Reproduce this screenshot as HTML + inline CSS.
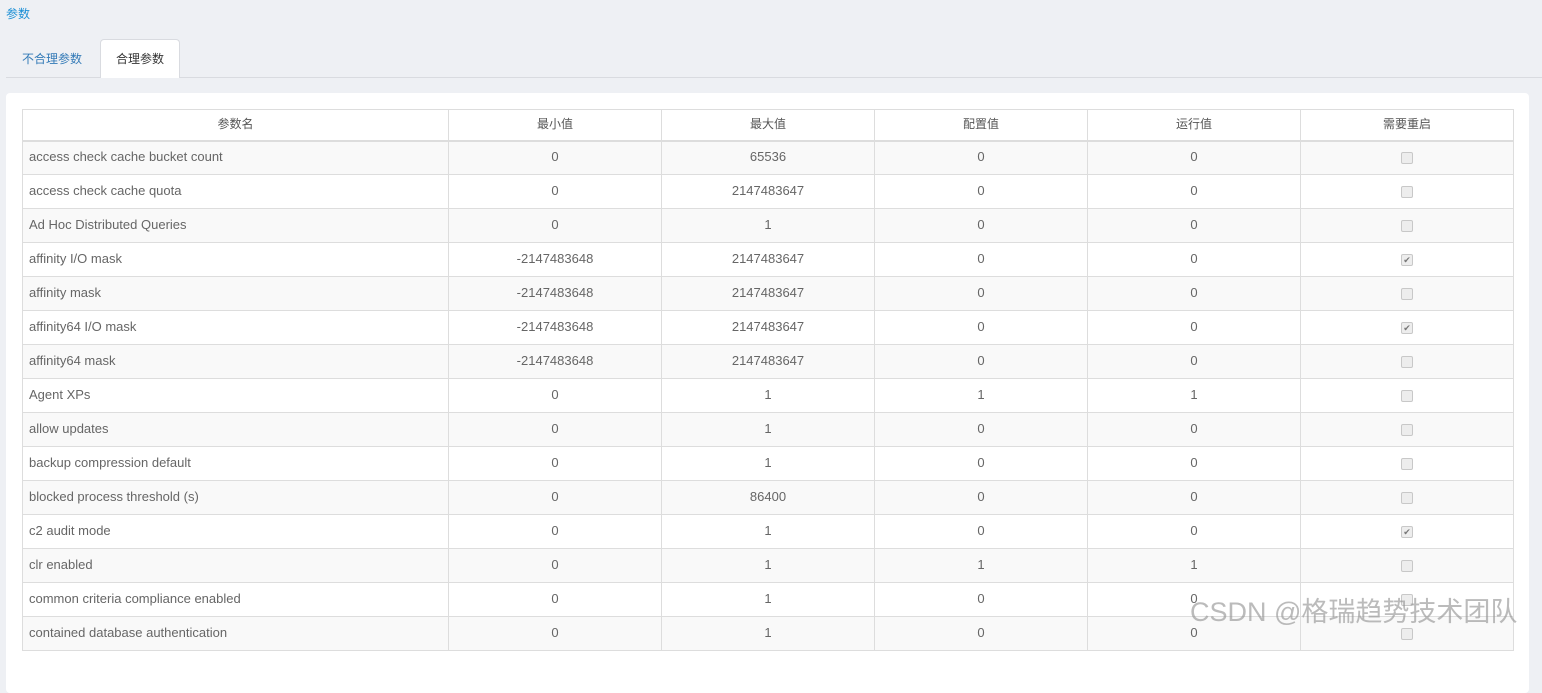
<!DOCTYPE html>
<html><head><meta charset="utf-8"><style>
*{box-sizing:border-box;margin:0;padding:0}
body{width:1542px;height:635px;overflow:hidden;background:#eef0f4;font-family:"Liberation Sans","Noto Sans CJK SC",sans-serif;font-size:13px;color:#666;position:relative}
.title{position:absolute;left:6px;top:5px;font-size:12px;color:#1a8fd6}
.tabline{position:absolute;left:6px;right:0;top:77px;border-top:1px solid #d9dbe0}
.tab1{position:absolute;left:22px;top:50px;font-size:12px;color:#337ab7}
.tab2{position:absolute;left:100px;top:39px;width:80px;height:39px;background:#fff;border:1px solid #d9dbe0;border-bottom:none;border-radius:4px 4px 0 0;font-size:12px;color:#333;text-align:center;line-height:38px}
.panel{position:absolute;left:6px;top:93px;width:1523px;height:600px;background:#fff;border-radius:4px}
table{position:absolute;left:22px;top:109px;border-collapse:collapse;table-layout:fixed;width:1491px}
td,th{border:1px solid #ddd;height:34px;text-align:center;font-weight:normal;padding:0 0 3px 0}
th{height:31px;border-bottom:2px solid #ddd;color:#555;font-size:12px;padding:0 0 2px 0}
td:first-child{text-align:left;padding-left:6px}
tr:nth-child(odd) td{background:#f9f9f9}
.cb{display:inline-block;width:12px;height:12px;border:1px solid #c8c8c8;border-radius:2px;background:#ededed;vertical-align:middle;position:relative;font-size:9px;line-height:10px;color:#777;text-align:center;margin-top:2px}
.wm{position:absolute;left:1190px;top:590px;font-size:27px;color:rgba(150,150,150,.65);font-family:"Liberation Sans","Noto Sans CJK SC",sans-serif}
</style></head><body>
<div class="title">参数</div>
<div class="tabline"></div>
<div class="tab1">不合理参数</div>
<div class="tab2">合理参数</div>
<div class="panel"></div>
<table>
<colgroup><col style="width:426px"><col style="width:213px"><col style="width:213px"><col style="width:213px"><col style="width:213px"><col style="width:213px"></colgroup>
<thead><tr><th>参数名</th><th>最小值</th><th>最大值</th><th>配置值</th><th>运行值</th><th>需要重启</th></tr></thead>
<tbody>
<tr><td>access check cache bucket count</td><td>0</td><td>65536</td><td>0</td><td>0</td><td><span class="cb"></span></td></tr>
<tr><td>access check cache quota</td><td>0</td><td>2147483647</td><td>0</td><td>0</td><td><span class="cb"></span></td></tr>
<tr><td>Ad Hoc Distributed Queries</td><td>0</td><td>1</td><td>0</td><td>0</td><td><span class="cb"></span></td></tr>
<tr><td>affinity I/O mask</td><td>-2147483648</td><td>2147483647</td><td>0</td><td>0</td><td><span class="cb">✔</span></td></tr>
<tr><td>affinity mask</td><td>-2147483648</td><td>2147483647</td><td>0</td><td>0</td><td><span class="cb"></span></td></tr>
<tr><td>affinity64 I/O mask</td><td>-2147483648</td><td>2147483647</td><td>0</td><td>0</td><td><span class="cb">✔</span></td></tr>
<tr><td>affinity64 mask</td><td>-2147483648</td><td>2147483647</td><td>0</td><td>0</td><td><span class="cb"></span></td></tr>
<tr><td>Agent XPs</td><td>0</td><td>1</td><td>1</td><td>1</td><td><span class="cb"></span></td></tr>
<tr><td>allow updates</td><td>0</td><td>1</td><td>0</td><td>0</td><td><span class="cb"></span></td></tr>
<tr><td>backup compression default</td><td>0</td><td>1</td><td>0</td><td>0</td><td><span class="cb"></span></td></tr>
<tr><td>blocked process threshold (s)</td><td>0</td><td>86400</td><td>0</td><td>0</td><td><span class="cb"></span></td></tr>
<tr><td>c2 audit mode</td><td>0</td><td>1</td><td>0</td><td>0</td><td><span class="cb">✔</span></td></tr>
<tr><td>clr enabled</td><td>0</td><td>1</td><td>1</td><td>1</td><td><span class="cb"></span></td></tr>
<tr><td>common criteria compliance enabled</td><td>0</td><td>1</td><td>0</td><td>0</td><td><span class="cb"></span></td></tr>
<tr><td>contained database authentication</td><td>0</td><td>1</td><td>0</td><td>0</td><td><span class="cb"></span></td></tr>
</tbody></table>
<div class="wm">CSDN @格瑞趋势技术团队</div>
</body></html>
